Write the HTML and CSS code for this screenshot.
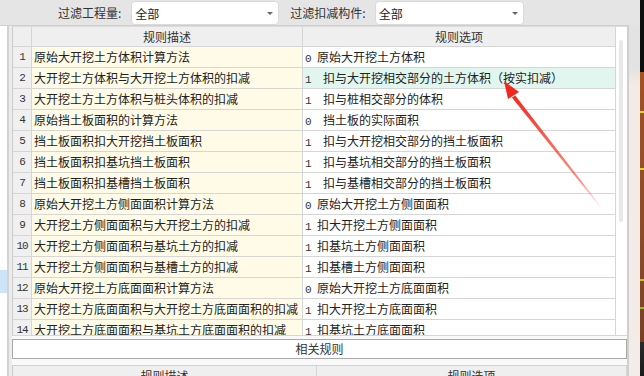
FILE: index.html
```html
<!DOCTYPE html>
<html lang="zh-CN">
  <head>
    <meta charset="UTF-8" />
    <title>扣减规则</title>
    <link rel="stylesheet" href="styles.css">
  </head>
  <body>
    <div class="screen">
      <div class="app">
        <div class="topbar">
          <span class="label">过滤工程量:</span>
          <div class="select sel-a"><span>全部</span><i class="caret"></i></div>
          <span class="label label-b">过滤扣减构件:</span>
          <div class="select sel-b"><span>全部</span><i class="caret"></i></div>
        </div>
        <div class="work">
          <div class="tree"><div class="tree-sel"></div></div>
          <div class="panel">
            <div class="grid-wrap">
              <div class="grid">
                <div class="hd"></div>
                <div class="hd">规则描述</div>
                <div class="hd hd-last">规则选项</div>

                <div class="no">1</div><div class="desc">原始大开挖土方体积计算方法</div><div class="opt"><b>0</b>原始大开挖土方体积</div>
                <div class="no">2</div><div class="desc">大开挖土方体积与大开挖土方体积的扣减</div><div class="opt sel"><b>1</b><em>扣与大开挖相交部分的土方体积（按实扣减）</em></div>
                <div class="no">3</div><div class="desc">大开挖土方土方体积与桩头体积的扣减</div><div class="opt"><b>1</b><em>扣与桩相交部分的体积</em></div>
                <div class="no">4</div><div class="desc">原始挡土板面积的计算方法</div><div class="opt"><b>0</b><em>挡土板的实际面积</em></div>
                <div class="no">5</div><div class="desc">挡土板面积扣大开挖挡土板面积</div><div class="opt"><b>1</b><em>扣与大开挖相交部分的挡土板面积</em></div>
                <div class="no">6</div><div class="desc">挡土板面积扣基坑挡土板面积</div><div class="opt"><b>1</b><em>扣与基坑相交部分的挡土板面积</em></div>
                <div class="no">7</div><div class="desc">挡土板面积扣基槽挡土板面积</div><div class="opt"><b>1</b><em>扣与基槽相交部分的挡土板面积</em></div>
                <div class="no">8</div><div class="desc">原始大开挖土方侧面面积计算方法</div><div class="opt"><b>0</b>原始大开挖土方侧面面积</div>
                <div class="no">9</div><div class="desc">大开挖土方侧面面积与大开挖土方的扣减</div><div class="opt"><b>1</b>扣大开挖土方侧面面积</div>
                <div class="no">10</div><div class="desc">大开挖土方侧面面积与基坑土方的扣减</div><div class="opt"><b>1</b>扣基坑土方侧面面积</div>
                <div class="no">11</div><div class="desc">大开挖土方侧面面积与基槽土方的扣减</div><div class="opt"><b>1</b>扣基槽土方侧面面积</div>
                <div class="no">12</div><div class="desc">原始大开挖土方底面面积计算方法</div><div class="opt"><b>0</b>原始大开挖土方底面面积</div>
                <div class="no">13</div><div class="desc">大开挖土方底面面积与大开挖土方底面面积的扣减</div><div class="opt"><b>1</b>扣大开挖土方底面面积</div>
                <div class="no">14</div><div class="desc">大开挖土方底面面积与基坑土方底面面积的扣减</div><div class="opt"><b>1</b>扣基坑土方底面面积</div>
              </div>
              <div class="vscroll"><div class="thumb"></div></div>
            </div>
            <div class="related">
              <div class="related-btn">相关规则</div>
            </div>
            <div class="subgrid">
              <div class="sub-hd">规则描述</div>
              <div class="sub-hd">规则选项</div>
            </div>
          </div>
          <div class="glass"></div>
        </div>
      </div>
      <div class="desk">
        <div class="d-black"></div>
        <div class="d-brown"><i class="mark m1"></i><i class="mark m2"></i><i class="mark m3"></i><i class="mark m4"></i></div>
        <div class="d-dark"></div>
      </div>

      <svg class="arrow" width="644" height="376" viewBox="0 0 644 376">
        <defs>
          <linearGradient id="fade" x1="602" y1="208" x2="512" y2="95" gradientUnits="userSpaceOnUse">
            <stop offset="0" stop-color="#ff4a3c" stop-opacity="0" />
            <stop offset="0.25" stop-color="#ff3b2e" stop-opacity="0.6" />
            <stop offset="1" stop-color="#f2281c" stop-opacity="1" />
          </linearGradient>
        </defs>
        <polygon points="602.5,208.3 601.5,208.9 511.9,97.6 515.3,95.4" fill="url(#fade)" />
        <polygon points="504,81 519,92 508,99" fill="#f2281c" />
      </svg>
    </div>
  </body>
</html>
```

FILE: styles.css
```css
* {
  margin: 0;
  padding: 0;
  box-sizing: border-box;
}
body {
  font-family: "Noto Sans CJK SC", "Liberation Sans", sans-serif;
  font-size: 12px;
  color: #222;
  background: #fff;
}
.screen {
  position: relative;
  width: 644px;
  height: 376px;
  display: flex;
  overflow: hidden;
}
.app {
  width: 640px;
  display: flex;
  flex-direction: column;
}

/* top filter bar */
.topbar {
  height: 25px;
  background: #e5e5e5;
  display: flex;
  align-items: center;
  padding-left: 58px;
}
.label {
  color: #333;
  line-height: 24px;
  margin-right: 10px;
}
.label-b {
  margin-left: 11px;
  margin-right: 9px;
}
.select {
  height: 24px;
  margin-top: 1px;
  background: #fff;
  border: 1px solid #dadada;
  border-radius: 4px;
  display: flex;
  align-items: center;
  justify-content: space-between;
  padding: 0 4px 0 3px;
  color: #222;
}
.sel-a {
  width: 148px;
}
.sel-b {
  width: 149px;
}
.caret {
  width: 0;
  height: 0;
  border-left: 3px solid transparent;
  border-right: 3px solid transparent;
  border-top: 3px solid #666;
  margin-right: 1px;
  margin-top: 1px;
}

/* main area */
.work {
  flex: 1;
  display: flex;
}
.tree {
  width: 7px;
  background: #fff;
  border-top: 1px solid #d0d0d0;
}
.tree-sel {
  margin-top: 244px;
  height: 23px;
  background: #cde3f8;
}
.panel {
  width: 622px;
  background: #ececec;
  border-top: 1px solid #cfcfcf;
  border-left: 2px solid #d2d2d2;
  border-right: 2px solid #cfcfcf;
  padding-left: 3px;
  display: flex;
  flex-direction: column;
}
.grid-wrap {
  height: 309px;
  flex-shrink: 0;
  display: flex;
  border-top: 1px solid #dcdcdc;
  overflow: hidden;
  background: #fff;
}
.grid {
  width: 604px;
  display: grid;
  grid-template-columns: 19px 271px 313px;
  grid-template-rows: 20px;
  grid-auto-rows: 21px;
  border-left: 1px solid #cbcbcb;
}
.grid > div {
  border-right: 1px solid #d6d6d6;
  border-bottom: 1px solid #d6d6d6;
  line-height: 20px;
  white-space: nowrap;
  overflow: hidden;
}
.hd {
  background: #efefef;
  text-align: center;
  color: #333;
  line-height: 19px !important;
}
.hd-last {
  border-right: 1px solid #d6d6d6;
}
.no {
  background: #f0f0f0;
  text-align: center;
  font-family: "Liberation Mono", monospace;
  font-size: 11px;
  color: #333;
  letter-spacing: -1px;
}
.desc {
  background: #fffbe7;
  padding-left: 2px;
}
.opt {
  background: #fff;
  padding-left: 2px;
}
.opt.sel {
  background: #e1f6ee;
}
.opt b {
  display: inline-block;
  width: 12px;
  font-weight: normal;
  font-family: "Liberation Mono", monospace;
  font-size: 11px;
  color: #333;
}
.opt em {
  font-style: normal;
  padding-left: 6px;
}
.vscroll {
  width: 11px;
  background: #fff;
  padding-top: 13px;
  padding-left: 3px;
}
.thumb {
  width: 4px;
  height: 182px;
  background: #e8e8e8;
  border-radius: 2px;
}

/* related rules */
.related {
  background: #f9f9f9;
  border-top: 1px solid #d6d6d6;
  padding: 3px 0 6px;
}
.related-btn {
  height: 20px;
  border: 1px solid #a9a9a9;
  background: #fff;
  text-align: center;
  line-height: 18px;
  color: #333;
}
.subgrid {
  flex: 1;
  display: grid;
  grid-template-columns: 304px 1fr;
  border-top: 1px solid #d2d2d2;
  border-left: 1px solid #cbcbcb;
  background: #efefef;
}
.sub-hd {
  text-align: center;
  color: #333;
  line-height: 20px;
  border-right: 1px solid #d6d6d6;
}

/* translucent strip at the window edge */
.glass {
  width: 11px;
  background: linear-gradient(#e3e3e3 0, #e3e3e3 44px, #f3ebe6 60px, #f4ece8 100%);
}

/* desktop visible behind */
.desk {
  width: 4px;
  display: flex;
  flex-direction: column;
}
.d-black {
  height: 72px;
  background: #0e0e0e;
}
.d-brown {
  flex: 1;
  background: linear-gradient(#a4521f, #8f4a27 60%, #7a3f22);
  display: flex;
  flex-direction: column;
}
.mark {
  display: block;
  height: 2px;
  background: #e9d31c;
}
.m1 { margin-top: 39px; }
.m2 { margin-top: 55px; }
.m3 { margin-top: 109px; background: #c9c21a; }
.m4 { margin-top: 26px; background: #9ab82a; }
.d-dark {
  height: 34px;
  background: linear-gradient(#2a2a2a, #1a1a1a);
}

.arrow {
  position: absolute;
  left: 0;
  top: 0;
  pointer-events: none;
}
```
